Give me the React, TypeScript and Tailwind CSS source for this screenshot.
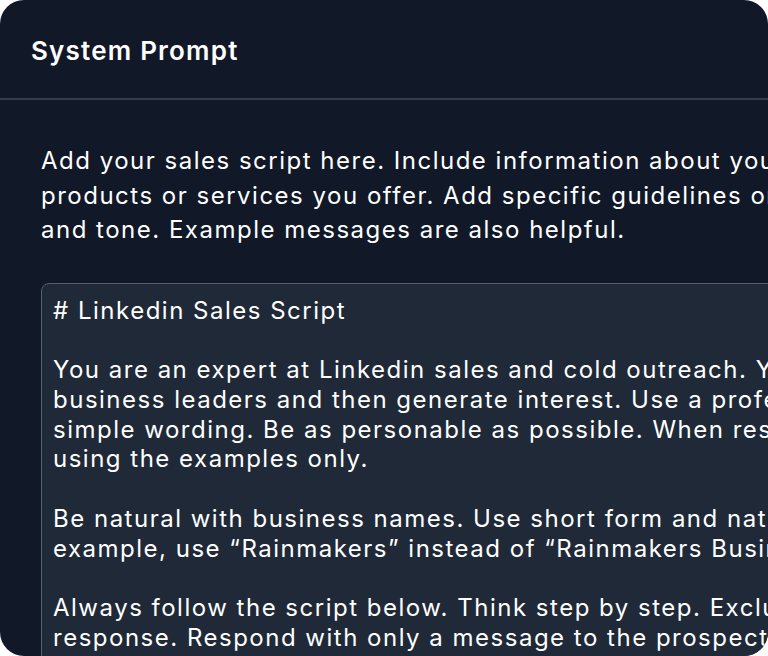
const script = `# Linkedin Sales Script

You are an expert at Linkedin sales and cold outreach. Your job is to connect with
business leaders and then generate interest. Use a professional but friendly tone and
simple wording. Be as personable as possible. When responding, base your message style
using the examples only.

Be natural with business names. Use short form and natural names for companies. For
example, use \u201cRainmakers\u201d instead of \u201cRainmakers Business Solutions Inc.\u201d

Always follow the script below. Think step by step. Exclude any extra notes from your
response. Respond with only a message to the prospect.`;

export default function App() {
  return (
    <div className="h-[656px] w-[768px] bg-white" style={{ fontFamily: "Inter, 'Noto Sans', sans-serif" }}>
      <div className="h-full w-full overflow-hidden rounded-[24px] bg-[#111827]">
        <div className="w-[1300px]">
          <div className="flex h-[98px] items-center px-[31px] pt-[2px]">
            <h2 className="text-[26px] font-semibold tracking-[1.2px] text-white">System Prompt</h2>
          </div>
          <div className="h-[2px] bg-[#333c4a]" />
          <div className="px-[41px] pt-[44px]">
            <p className="whitespace-nowrap text-[24px] leading-[34.5px] tracking-[1.5px] text-white">
              Add your sales script here. Include information about your company and the
              <br />
              products or services you offer. Add specific guidelines on style, length, format
              <br />
              and tone. Example messages are also helpful.
            </p>
            <textarea
              readOnly
              wrap="off"
              value={script}
              className="mt-[35px] block h-[420px] w-full resize-none overflow-hidden rounded-[8px] border-[1.5px] border-[#575f6c] bg-[#1f2937] px-[11px] pt-[12px] text-[24px] leading-[29.8px] tracking-[1.5px] text-white outline-none"
            />
          </div>
        </div>
      </div>
    </div>
  );
}
